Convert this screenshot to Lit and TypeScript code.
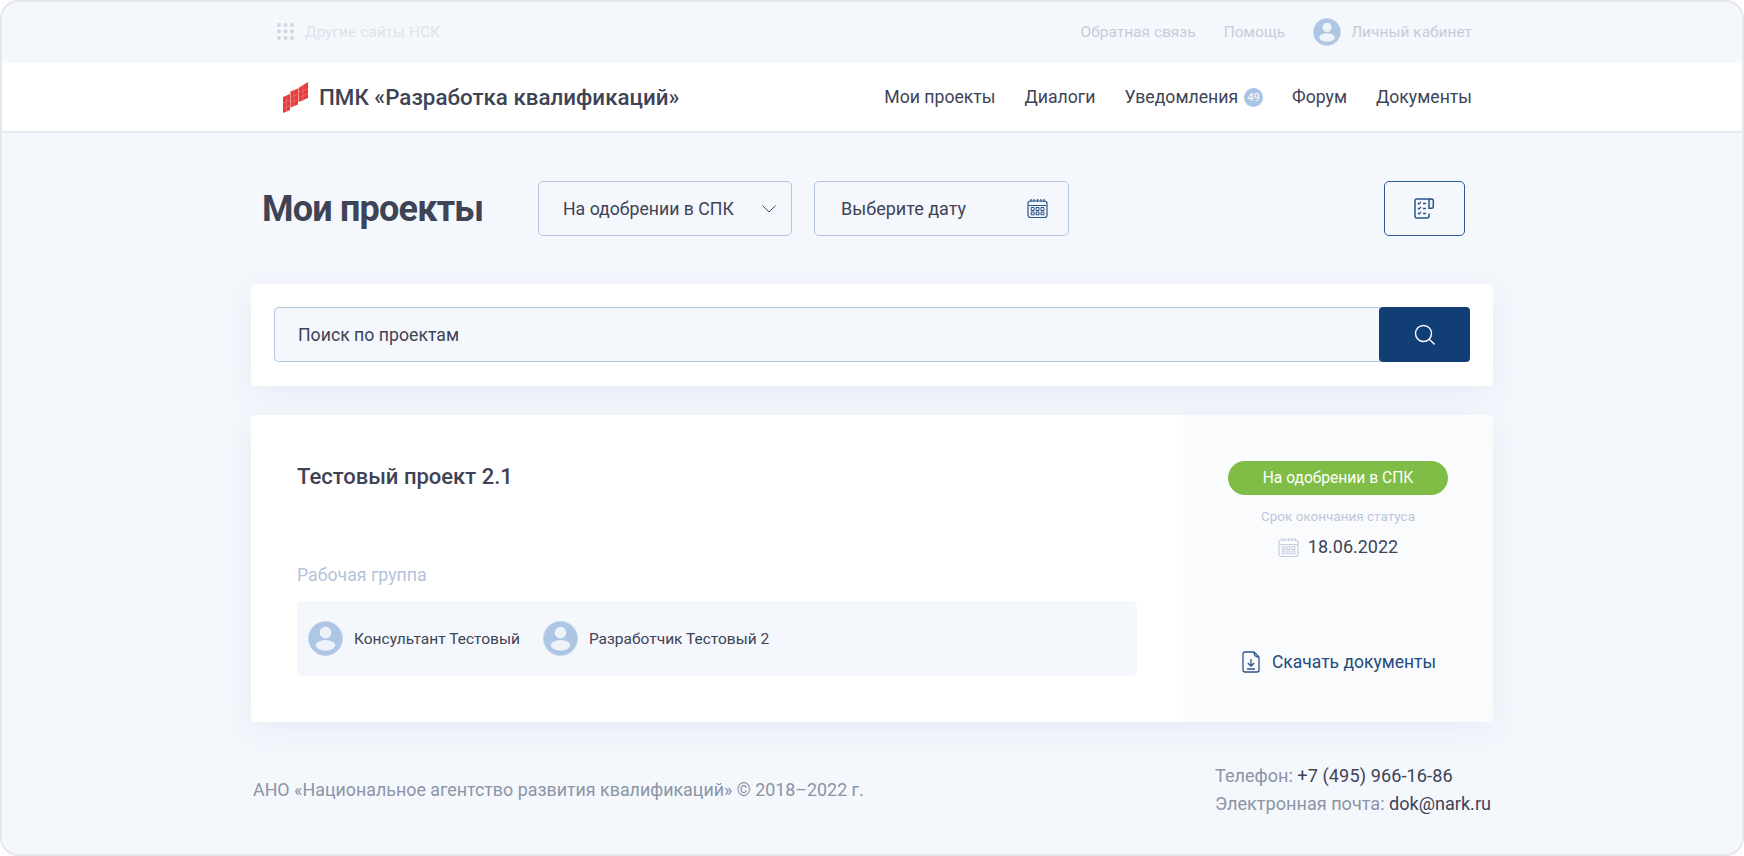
import { LitElement, html, css, svg } from "lit";
import { customElement } from "lit/decorators.js";

const avatar = (size: number) => html`<svg class="av" width=${size} height=${size} viewBox="0 0 36 36">
  <circle cx="18" cy="18" r="17.500" fill="#adc6e3" stroke="#c5d7ec" stroke-width="1"/>
  <circle cx="18" cy="12" r="6" fill="#eef3fa"/>
  <ellipse cx="18" cy="25" rx="10" ry="5.500" fill="#eef3fa"/>
</svg>`;

const calCells = (c: string, w: number) => svg`
  ${[4.200, 9.100, 14].map(x => [9.600, 14].map(y => svg`<rect x=${x} y=${y} width="2.900" height="2.800" rx=".4" fill="none" stroke=${c} stroke-width=${w}/>`))}
`;

const calendar = (c: string, size: number, sw = 1.200) => html`<svg width=${size} height=${size} viewBox="0 0 21 21" fill="none">
  <rect x="1" y="3" width="19" height="16.500" rx="2.500" stroke=${c} stroke-width=${sw}/>
  <path d="M1.500 7.500h18M4 1v3M7 1v3M10.500 1v3M14 1v3M17 1v3" stroke=${c} stroke-width=${sw}/>
  ${calCells(c, sw * 0.85)}
</svg>`;

@customElement("app-root")
export class AppRoot extends LitElement {
  static styles = css`
    :host { display: block; font-family: Roboto, "Noto Sans", sans-serif; color: #3e4356; }
    * { box-sizing: border-box; }
    .frame { width: 1744px; height: 856px; border: 2px solid #e4e7eb; border-radius: 18px; overflow: hidden; background: #f4f7fc; }
    .wrap { width: 1242px; margin: 0 auto; }
    .topbar { height: 61px; }
    .topbar .wrap { height: 100%; display: flex; align-items: center; padding: 0 21px 2px 26px; font-size: 15.500px; color: #c6ccd8; }
    .others { display: flex; align-items: center; gap: 11px; color: #dfe3ea; }
    .top-right { margin-left: auto; display: flex; align-items: center; }
    .top-right .fb { margin-right: 28px; }
    .top-right .help { margin-right: 28px; }
    .top-right .av { margin-right: 10px; }
    .nav { height: 70px; background: #fff; border-bottom: 2px solid #e8ecf2; }
    .nav .wrap { height: 100%; display: flex; align-items: center; padding: 0 21px 0 32px; }
    .brand { display: flex; align-items: center; gap: 11px; font-size: 22.350px; font-weight: 500; color: #3e4356; }
    .links { margin-left: auto; display: flex; align-items: center; gap: 29px; font-size: 17.650px; }
    .notif { display: flex; align-items: center; gap: 6px; }
    .badge { width: 19px; height: 19px; border-radius: 50%; background: #a9c4e4; color: #fff; font-size: 11px; display: flex; align-items: center; justify-content: center; }
    .tools { margin-top: 48px; height: 55px; display: flex; align-items: center; padding: 0 28px 0 11px; }
    h1 { margin: 0 56px 0 0; font-size: 36px; font-weight: 700; letter-spacing: -0.800px; width: 220px; white-space: nowrap; color: #3e4356; }
    .field { height: 55px; width: 254px; border: 1px solid #b3c8e0; border-radius: 5px; display: flex; align-items: center; justify-content: space-between; font-size: 17.700px; }
    .sel { padding: 0 14px 0 24px; margin-right: 22px; }
    .date { width: 255px; padding: 0 20px 0 26px; font-size: 18px; }
    .list-btn { margin-left: auto; width: 81px; height: 55px; border: 1px solid #2a5a94; border-radius: 5px; display: flex; align-items: center; justify-content: center; }
    .card { background: #fff; border-radius: 5px; box-shadow: 0 8px 30px rgba(120, 150, 200, 0.1); }
    .search { margin-top: 48px; height: 102px; padding: 23px; display: flex; }
    .s-input { flex: 1; height: 55px; background: #f4f7fc; border: 1px solid #b3c8e0; border-right: none; border-radius: 5px 0 0 5px; display: flex; align-items: center; padding-left: 23px; font-size: 17.700px; }
    .s-btn { width: 91px; height: 55px; margin-left: -1px; background: #113e74; border-radius: 4px; display: flex; align-items: center; justify-content: center; }
    .project { margin-top: 29px; height: 307px; display: flex; overflow: hidden; }
    .p-main { flex: 1; padding: 45px 46px 0; display: flex; flex-direction: column; }
    h2 { margin: 0; font-size: 22px; font-weight: 500; line-height: 34px; }
    .wg { margin-top: 71px; font-size: 17.700px; line-height: 20px; color: #b5c2d8; }
    .members { margin-top: 16px; height: 75px; background: #f4f7fc; border-radius: 5px; display: flex; align-items: center; padding: 0 11px; gap: 23px; font-size: 15.500px; }
    .member { display: flex; align-items: center; gap: 11px; }
    .p-side { width: 310px; background: #fafbfd; display: flex; flex-direction: column; align-items: center; padding-top: 46px; }
    .status { width: 220px; height: 34px; border-radius: 17px; background: #7fbd47; color: #fff; font-size: 15.600px; display: flex; align-items: center; justify-content: center; }
    .until { margin-top: 12px; font-size: 13.500px; line-height: 18px; color: #bcc7da; }
    .d-row { margin-top: 10px; display: flex; align-items: center; gap: 9px; font-size: 18px; line-height: 24px; }
    .dl { margin-top: 91px; margin-left: 2px; display: flex; align-items: center; gap: 12px; font-size: 17.500px; color: #234b7c; line-height: 24px; }
    .footer { margin-top: 40px; display: flex; align-items: center; font-size: 17.850px; line-height: 28px; color: #8c94a6; }
    .copy { padding-left: 2px; }
    .contacts { margin-left: auto; width: 278px; font-size: 18.100px; }
    .contacts b { font-weight: 400; color: #3e4356; }
    .phone { letter-spacing: 0.100px; }
  `;

  render() {
    const dots = [2, 8.500, 15].flatMap(y => [2, 8.500, 15].map(x => svg`<circle cx=${x} cy=${y} r="2" fill="#d2d6de"/>`));
    return html`<div class="frame">
      <div class="topbar"><div class="wrap">
        <div class="others"><svg width="17" height="17" viewBox="0 0 17 17">${dots}</svg>Другие сайты НСК</div>
        <div class="top-right"><span class="fb">Обратная связь</span><span class="help">Помощь</span>${avatar(28)}<span>Личный кабинет</span></div>
      </div></div>
      <div class="nav"><div class="wrap">
        <div class="brand">
          <svg width="25" height="31" viewBox="0 0 25 31">
            <path d="M0 15l7-3v16l-7 3zM7.500 9.500l7.500-3v16l-7.500 3zM15.500 6l9.500-6v16l-9.500 4z" fill="#e83c3c"/>
            <path d="M0 21l7-3M0 26.500l7-3M7.500 15l7.500-3M7.500 20.500l7.500-3M15.500 10.500l9.500-4M15.500 15.500l9.500-4M3.500 13.500v16M11 8v16M20 3.500v16" stroke="#f07a7a" stroke-width=".6" fill="none"/>
          </svg>
          ПМК «Разработка квалификаций»
        </div>
        <div class="links">
          <span>Мои проекты</span><span>Диалоги</span>
          <span class="notif">Уведомления<span class="badge">49</span></span>
          <span>Форум</span><span>Документы</span>
        </div>
      </div></div>
      <div class="wrap">
        <div class="tools">
          <h1>Мои проекты</h1>
          <div class="field sel">На одобрении в СПК
            <svg width="16" height="10" viewBox="0 0 16 10" fill="none"><path d="M1.500 1.500l6.500 6.500 6.500-6.500" stroke="#3e4f6a" stroke-width="1"/></svg>
          </div>
          <div class="field date">Выберите дату ${calendar("#2c5488", 21)}</div>
          <div class="list-btn">
            <svg width="21" height="21" viewBox="0 0 21 21" fill="none" stroke="#2c5488" stroke-width="1.500">
              <path d="M15 15.500V18c0 1-.800 2-2 2H3c-1 0-2-.800-2-2V3c0-1 .800-2 2-2h14.500c1 0 1.800.800 1.800 1.800V9c0 1-1 1.200-1.800 1.200H15V3c0-1 .500-2 2.500-2"/>
              <path d="M4 5l1 1 2-2M4 10l1 1 2-2M4 15l1 1 2-2M9 5.500h3M9 10.500h3M9 15.500h3" stroke-width="1.300"/>
            </svg>
          </div>
        </div>
        <div class="card search">
          <div class="s-input">Поиск по проектам</div>
          <div class="s-btn">
            <svg width="21" height="21" viewBox="0 0 21 21" fill="none" stroke="#fff" stroke-width="1.400"><circle cx="9.500" cy="9.500" r="8"/><path d="M15.200 15.200l5 4.800" stroke-linecap="round"/></svg>
          </div>
        </div>
        <div class="card project">
          <div class="p-main">
            <h2>Тестовый проект 2.1</h2>
            <div class="wg">Рабочая группа</div>
            <div class="members">
              <div class="member">${avatar(35)}Консультант Тестовый</div>
              <div class="member">${avatar(35)}Разработчик Тестовый 2</div>
            </div>
          </div>
          <div class="p-side">
            <div class="status">На одобрении в СПК</div>
            <div class="until">Срок окончания статуса</div>
            <div class="d-row">${calendar("#c5cfe0", 21)}18.06.2022</div>
            <div class="dl">
              <svg width="18" height="22" viewBox="0 0 18 22" fill="none" stroke="#2c5488" stroke-width="1.300"><path d="M12 1H3C1.800 1 1 1.800 1 3v16c0 1.200.800 2 2 2h12c1.200 0 2-.800 2-2V6z"/><path d="M12 1c-.200 3 1 5 5 5M9 8v7M5.800 12L9 15l3.200-3M5 18h8"/></svg>
              Скачать документы
            </div>
          </div>
        </div>
        <div class="footer">
          <div class="copy">АНО «Национальное агентство развития квалификаций» © 2018–2022 г.</div>
          <div class="contacts">
            <div>Телефон: <b class="phone">+7 (495) 966-16-86</b></div>
            <div>Электронная почта: <b>dok@nark.ru</b></div>
          </div>
        </div>
      </div>
    </div>`;
  }
}
